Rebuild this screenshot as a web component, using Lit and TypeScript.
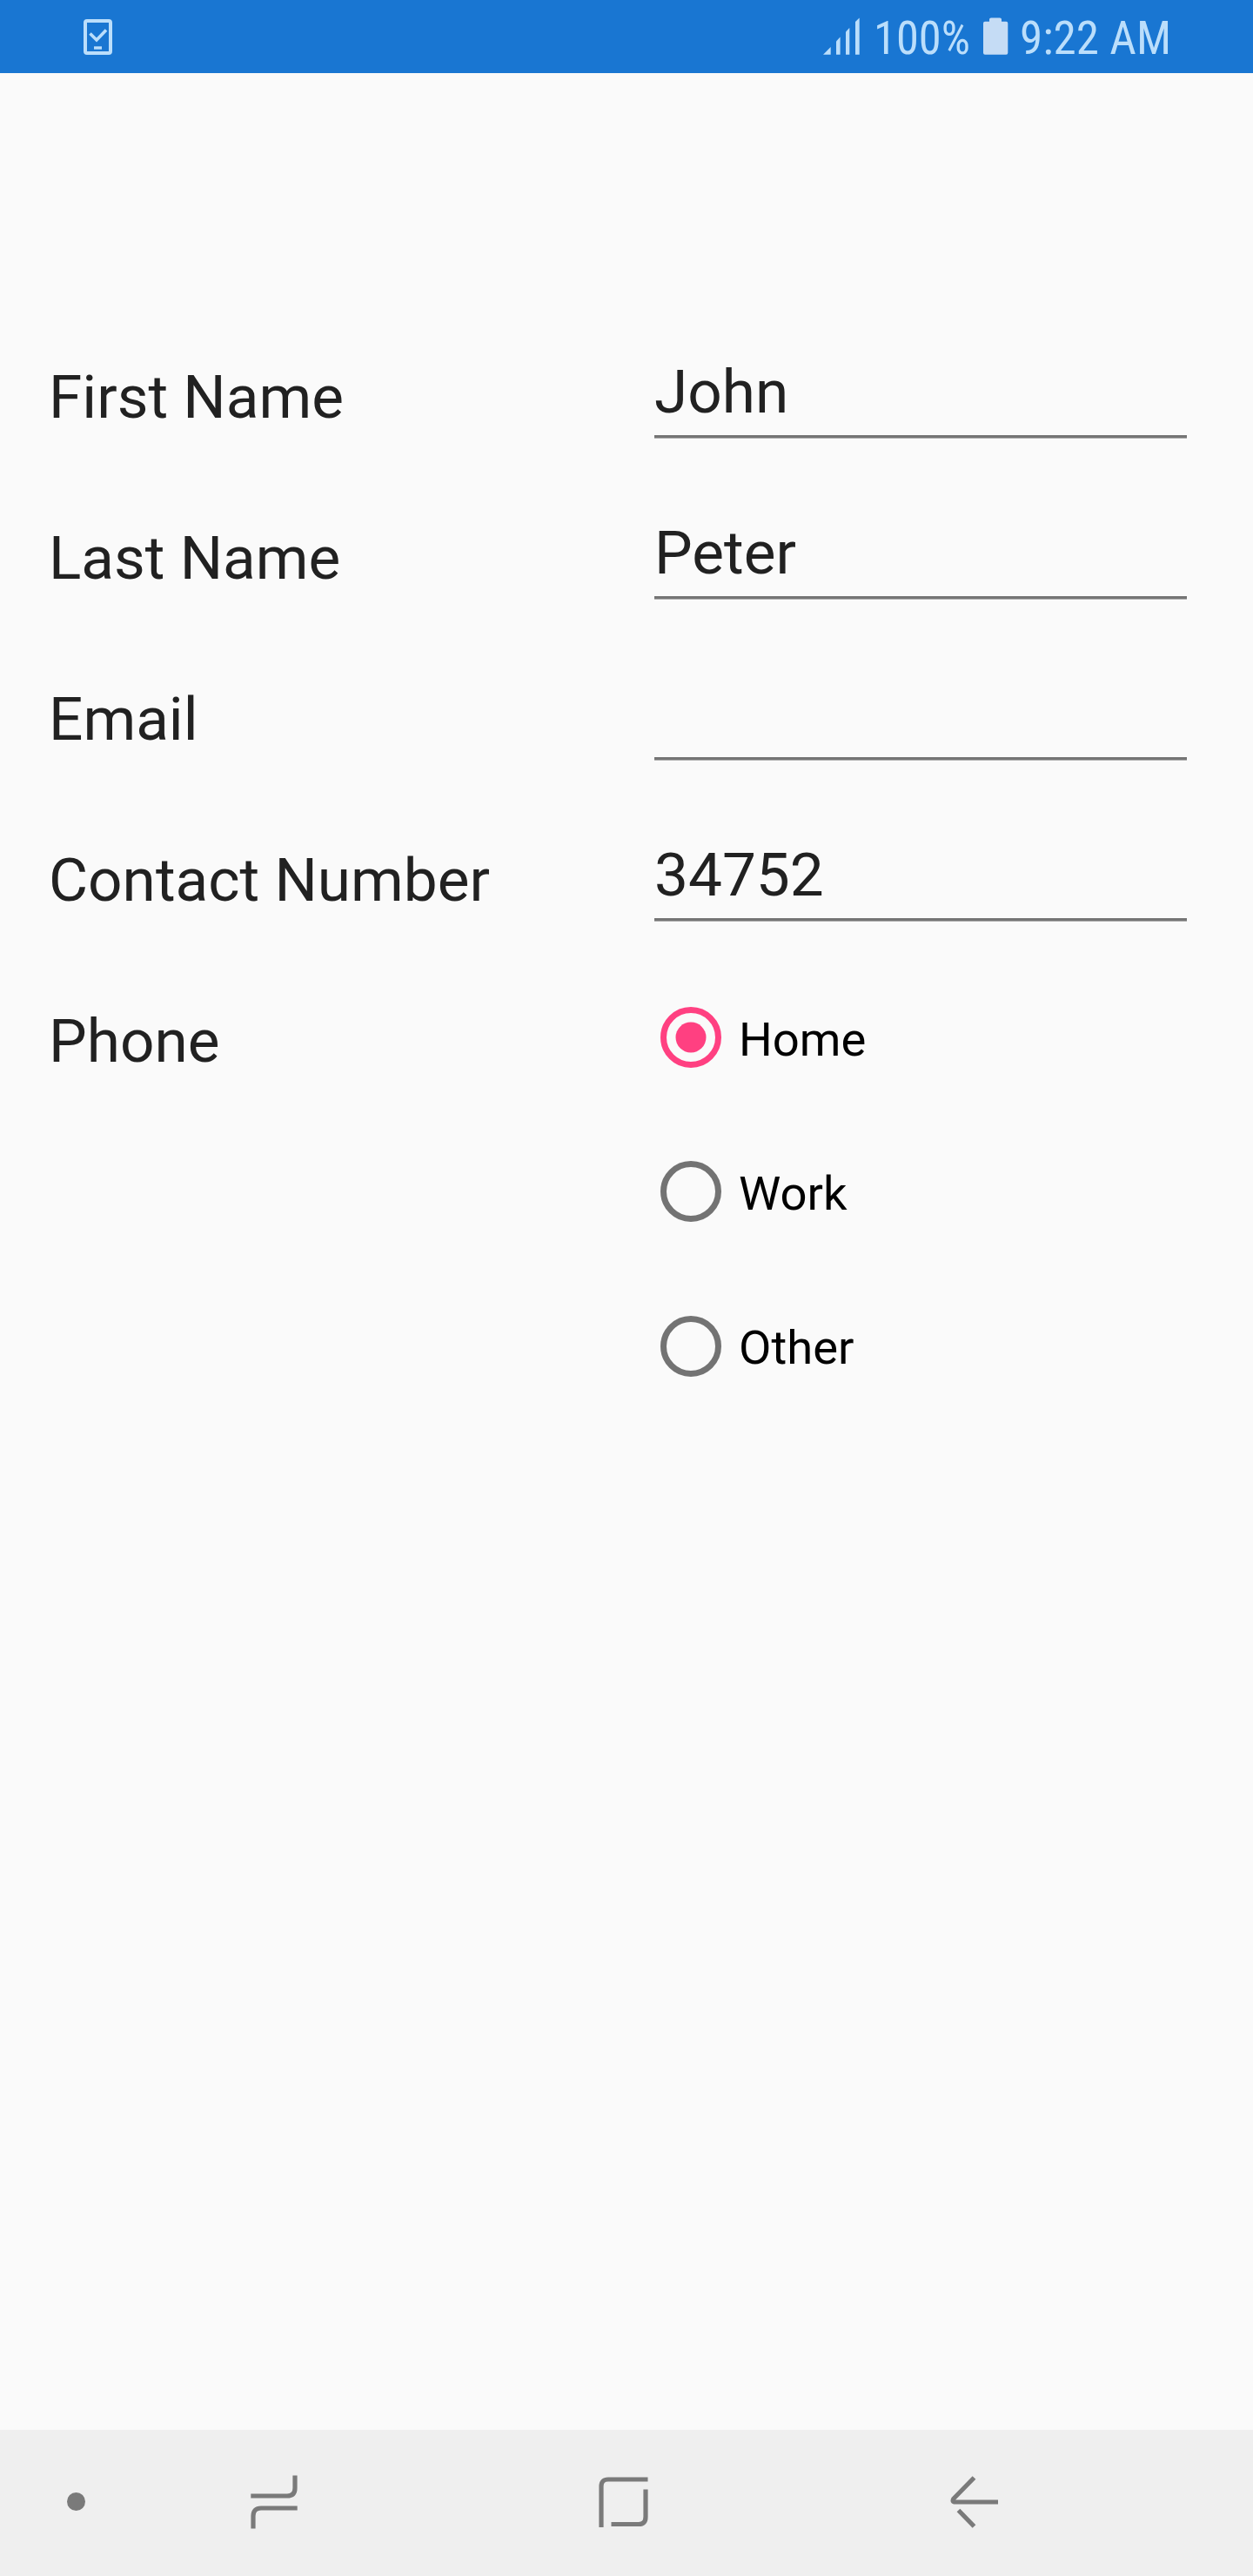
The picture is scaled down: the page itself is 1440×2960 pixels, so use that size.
import { LitElement, html, css, svg, nothing } from "lit";
import { customElement, property, state } from "lit/decorators.js";

@customElement("status-bar")
class StatusBar extends LitElement {
  static styles = css`
    :host {
      display: flex;
      box-sizing: border-box;
      height: 84px;
      padding: 20px 96px 0 96px;
      justify-content: space-between;
      align-items: flex-start;
      background: #1976d2;
      color: #bbdefb;
    }
    .tray {
      display: flex;
      align-items: flex-start;
    }
    svg {
      display: block;
      overflow: visible;
    }
    .battery {
      margin-left: 16px;
      margin-right: 13px;
    }
    .percent {
      margin-left: 15px;
    }
    text {
      font-family: "Roboto Condensed", Roboto, sans-serif;
      font-stretch: condensed;
      font-size: 53px;
      fill: currentColor;
    }
  `;

  render() {
    return html`
      <svg class="device" width="33" height="43" viewBox="0 0 33 43" fill="none" stroke="currentColor">
        <rect x="2" y="4" width="29" height="37" rx="2" stroke-width="4"></rect>
        <path d="M7.5 18.5 L15 26 L26 14.5" stroke-width="3.6"></path>
        <path d="M12 35 H21" stroke-width="3.4"></path>
      </svg>
      <div class="tray">
        <svg width="43" height="43" viewBox="0 0 43 43" fill="currentColor">
          <path d="M0 42.7 L8.7 34 V42.7 Z"></path>
          <path d="M15 42.7 V27.5 L19.6 22.5 V42.7 Z"></path>
          <path d="M26 42.7 V16.5 L30.3 12 V42.7 Z"></path>
          <path d="M37 42.7 V5 L41.7 0.5 V42.7 Z"></path>
        </svg>
        <svg class="percent" width="110" height="43">
          <text x="0" y="42" textLength="111" lengthAdjust="spacingAndGlyphs">100%</text>
        </svg>
        <svg class="battery" width="29" height="43" viewBox="0 0 29 43" fill="#c5dcf5">
          <path d="M2 4.7 H7 V2.2 Q7 0.5 9 0.5 H19 Q21 0.5 21 2.2 V4.7 H26.3 Q28.3 4.7 28.3 6.7 V40.7 Q28.3 42.7 26.3 42.7 H2 Q0 42.7 0 40.7 V6.7 Q0 4.7 2 4.7 Z"></path>
        </svg>
        <svg width="172" height="43">
          <text x="0" y="42" textLength="174" lengthAdjust="spacingAndGlyphs">9:22 AM</text>
        </svg>
      </div>
    `;
  }
}

@customElement("form-row")
class FormRow extends LitElement {
  @property() label = "";

  static styles = css`
    :host {
      display: grid;
      grid-template-columns: 696px 612px;
      min-height: 185px;
      align-items: start;
    }
    .label {
      font-size: 69.3px;
      line-height: 113px;
      color: #212121;
      white-space: nowrap;
    }
  `;

  render() {
    return html`<span class="label">${this.label}</span><slot></slot>`;
  }
}

@customElement("text-field")
class TextField extends LitElement {
  @property() value = "";

  static styles = css`
    :host {
      display: block;
      color: #212121;
    }
    .value {
      height: 100px;
      font-size: 69.3px;
      line-height: 101px;
      white-space: nowrap;
    }
    .line {
      height: 4px;
      background: linear-gradient(#757575 3px, #aeaeae 3px);
    }
  `;

  render() {
    return html`<div class="value">${this.value}</div><div class="line"></div>`;
  }
}

@customElement("radio-option")
class RadioOption extends LitElement {
  @property() label = "";
  @property({ type: Boolean }) checked = false;

  static styles = css`
    :host {
      display: flex;
      align-items: center;
      height: 104px;
      padding-left: 7px;
      color: #737373;
      cursor: pointer;
    }
    :host([checked]) {
      color: #ff4081;
    }
    svg {
      display: block;
    }
    .text {
      padding: 5px 0 0 20px;
      font-size: 54.4px;
      line-height: 80px;
      color: #000;
    }
  `;

  render() {
    return html`
      <svg width="70" height="70" viewBox="0 0 70 70">
        <circle cx="35" cy="35" r="31.5" fill="none" stroke="currentColor" stroke-width="7"></circle>
        ${this.checked ? svg`<circle cx="35" cy="35" r="17.5" fill="currentColor"></circle>` : nothing}
      </svg>
      <span class="text">${this.label}</span>
    `;
  }
}

@customElement("nav-bar")
class NavBar extends LitElement {
  static styles = css`
    :host {
      display: flex;
      align-items: center;
      box-sizing: border-box;
      height: 168px;
      padding: 0 292px 3px 77px;
      background: #efefef;
      color: #7a7a7a;
    }
    svg {
      display: block;
      fill: none;
      stroke: currentColor;
      stroke-width: 5.2;
    }
    .dot {
      width: 21px;
      height: 21px;
      border-radius: 50%;
      background: currentColor;
    }
    .recents {
      margin-left: 190px;
    }
    .home {
      margin-left: 346px;
    }
    .back {
      margin-left: 347px;
    }
  `;

  render() {
    return html`
      <div class="dot"></div>
      <svg class="recents" width="54" height="62" viewBox="0 0 54 62">
        <path d="M0.3 24 H42 Q51 24 51 15 V0.5"></path>
        <path d="M53.7 38 H12 Q3 38 3 47 V61.5"></path>
      </svg>
      <svg class="home" width="57" height="58" viewBox="0 0 57 58">
        <path d="M3 58 V11 Q3 3 11 3 H56.5"></path>
        <path d="M54 14.5 V46 Q54 54.5 46 54.5 H14.5"></path>
      </svg>
      <svg class="back" width="56" height="62" viewBox="0 0 56 62">
        <path d="M27.5 3 L4 27 Q1.5 31 6 31 H55"></path>
        <path d="M9.5 40.5 L27.5 59"></path>
      </svg>
    `;
  }
}

@customElement("app-root")
class AppRoot extends LitElement {
  @state() private phone = "Home";

  private fields = [
    { label: "First Name", value: "John" },
    { label: "Last Name", value: "Peter" },
    { label: "Email", value: "" },
    { label: "Contact Number", value: "34752" },
  ];

  private phones = ["Home", "Work", "Other"];

  static styles = css`
    :host {
      display: flex;
      flex-direction: column;
      width: 1440px;
      height: 2960px;
      background: #fafafa;
      font-family: Roboto, sans-serif;
    }
    .form {
      flex: 1;
      padding: 316px 0 0 56px;
    }
    .options {
      display: flex;
      flex-direction: column;
      gap: 73.4px;
    }
  `;

  render() {
    return html`
      <status-bar></status-bar>
      <main class="form">
        ${this.fields.map(
          (f) => html`<form-row .label=${f.label}><text-field .value=${f.value}></text-field></form-row>`
        )}
        <form-row label="Phone">
          <div class="options">
            ${this.phones.map(
              (p) => html`<radio-option
                .label=${p}
                ?checked=${p === this.phone}
                @click=${() => (this.phone = p)}
              ></radio-option>`
            )}
          </div>
        </form-row>
      </main>
      <nav-bar></nav-bar>
    `;
  }
}
